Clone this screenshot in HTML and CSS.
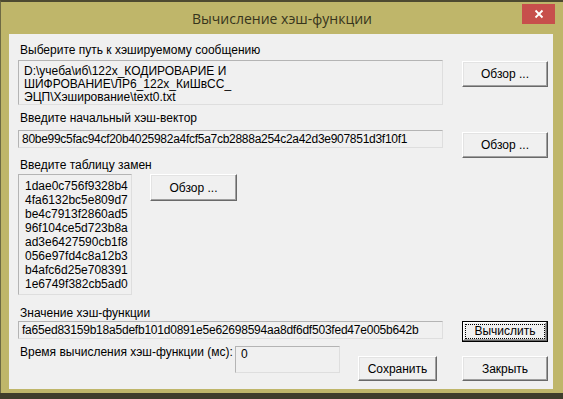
FILE: index.html
```html
<!DOCTYPE html>
<html lang="ru">
  <head>
    <meta charset="UTF-8" />
    <title>Вычисление хэш-функции</title>
    <link rel="stylesheet" href="styles.css">
  </head>
  <body>
    <div class="window">
      <div class="titlebar">
        <span class="title">Вычисление хэш-функции</span>
        <span class="close">
          <svg width="10" height="10" viewBox="0 0 10 10">
            <path d="M1.5 1.5 L8.5 8.5 M8.5 1.5 L1.5 8.5" stroke="#fff" stroke-width="1.8" />
          </svg>
        </span>
      </div>

      <div class="client">
        <div class="label label-path">Выберите путь к хэшируемому сообщению</div>
        <div class="field field-path">
          <div>D:\учеба\иб\122x_КОДИРОВАРИЕ И</div>
          <div>ШИФРОВАНИЕ\ЛР6_122x_КиШвСС_</div>
          <div>ЭЦП\Хэширование\text0.txt</div>
        </div>
        <button class="btn btn-path">Обзор ...</button>

        <div class="label label-iv">Введите начальный хэш-вектор</div>
        <div class="field field-iv">80be99c5fac94cf20b4025982a4fcf5a7cb2888a254c2a42d3e907851d3f10f1</div>
        <button class="btn btn-iv">Обзор ...</button>

        <div class="label label-table">Введите таблицу замен</div>
        <div class="table-row">
          <div class="field field-table">
            <div>1dae0c756f9328b4</div>
            <div>4fa6132bc5e809d7</div>
            <div>be4c7913f2860ad5</div>
            <div>96f104ce5d723b8a</div>
            <div>ad3e6427590cb1f8</div>
            <div>056e97fd4c8a12b3</div>
            <div>b4afc6d25e708391</div>
            <div>1e6749f382cb5ad0</div>
          </div>
          <button class="btn btn-table">Обзор ...</button>
        </div>

        <div class="label label-hash">Значение хэш-функции</div>
        <div class="field field-hash">fa65ed83159b18a5defb101d0891e5e62698594aa8df6df503fed47e005b642b</div>
        <button class="btn btn-calc"><span class="focus">Вычислить</span></button>

        <div class="bottom-row">
          <div class="label label-time">Время вычисления хэш-функции (мс):</div>
          <div class="field field-time">0</div>
          <button class="btn btn-save">Сохранить</button>
          <button class="btn btn-close">Закрыть</button>
        </div>
      </div>
    </div>
  </body>
</html>
```

FILE: styles.css
```css
body {
  margin: 0;
  background-color: #3f3d2b;
  font-family: "Liberation Sans", Arial, sans-serif;
  font-size: 12px;
  color: #000;
}

.window {
  width: 563px;
  height: 393px;
  box-sizing: border-box;
  background-color: #bfb66a;
  border-top: 2px solid #4d4a31;
  border-left: 1px solid #6e6a44;
  display: flex;
  flex-direction: column;
}

.titlebar {
  height: 32px;
  display: grid;
}

.title,
.close {
  grid-area: 1 / 1;
}

.title {
  justify-self: center;
  align-self: center;
  padding-top: 1px;
  font-family: "Open Sans", "Noto Sans", sans-serif;
  font-size: 14px;
  color: #36341c;
}

.close {
  justify-self: end;
  align-self: start;
  margin-top: 2px;
  margin-right: 8px;
  width: 33px;
  height: 20px;
  background-color: #c74f4c;
  display: flex;
  align-items: center;
  justify-content: center;
}

.client {
  margin-left: 8px;
  width: 544px;
  height: 355px;
  box-sizing: border-box;
  background-color: #f0f0f0;
  padding: 9px 0 0 9px;
  display: grid;
  grid-template-columns: 425px 86px;
  grid-template-rows: 14px 48px 25px 18px 26px 121px 26px 18px auto;
  column-gap: 19px;
  align-items: start;
}

.label {
  line-height: 14px;
  padding-left: 2px;
  white-space: nowrap;
}

.field {
  box-sizing: border-box;
  background-color: #f0f0f0;
  border: 1px solid;
  border-color: #b4b4b4 #dedede #dedede #b4b4b4;
  line-height: 14px;
  white-space: nowrap;
  overflow: hidden;
}

.btn {
  box-sizing: border-box;
  font-family: inherit;
  font-size: 12px;
  color: #000;
  background-color: #f0f0f0;
  border: 1px solid;
  border-color: #fff #696969 #696969 #fff;
  box-shadow: inset -1px -1px #a0a0a0, inset 1px 1px #e3e3e3;
  padding: 0;
  width: 86px;
  height: 26px;
}

/* путь к сообщению */
.label-path {
  grid-column: 1;
  grid-row: 1;
}

.field-path {
  grid-column: 1;
  grid-row: 2;
  margin-top: 3px;
  height: 45px;
  padding: 4px 0 0 5px;
  line-height: 13px;
}

.btn-path {
  grid-column: 2;
  grid-row: 2;
  margin-top: 4px;
}

/* хэш-вектор */
.label-iv {
  grid-column: 1;
  grid-row: 3;
  padding-top: 6px;
}

.field-iv {
  grid-column: 1;
  grid-row: 4;
  height: 18px;
  padding: 1px 0 0 3px;
  letter-spacing: -0.28px;
}

.btn-iv {
  grid-column: 2;
  grid-row: 4 / span 2;
  margin-top: 2px;
}

/* таблица замен */
.label-table {
  grid-column: 1;
  grid-row: 5;
  padding-top: 10px;
}

.table-row {
  grid-column: 1;
  grid-row: 6;
  display: flex;
  align-items: flex-start;
  gap: 18px;
}

.field-table {
  width: 114px;
  height: 121px;
  padding: 4px 0 0 6px;
}

.btn-table {
  width: 87px;
  height: 27px;
}

/* значение */
.label-hash {
  grid-column: 1;
  grid-row: 7;
  padding-top: 11px;
}

.field-hash {
  grid-column: 1;
  grid-row: 8;
  height: 18px;
  padding: 1px 0 0 3px;
  letter-spacing: -0.22px;
}

.btn-calc {
  grid-column: 2;
  grid-row: 8;
  height: 21px;
  border-color: #000;
  box-shadow: inset -1px -1px #696969, inset 1px 1px #fff, inset -2px -2px #a0a0a0;
  padding: 3px;
}

.focus {
  display: block;
  height: 100%;
  box-sizing: border-box;
  outline: 1px dotted #000;
  line-height: 13px;
}

.bottom-row {
  grid-column: 1 / span 2;
  grid-row: 9;
  display: flex;
  align-items: flex-start;
}

.label-time {
  flex: 0 0 217px;
  box-sizing: border-box;
  margin-top: 6px;
}

.field-time {
  margin-top: 7px;
  width: 105px;
  height: 27px;
  padding: 0 0 0 5px;
}

.btn-save {
  margin-top: 17px;
  margin-left: 18px;
  width: 79px;
  height: 25px;
}

.btn-close {
  margin-top: 17px;
  margin-left: 25px;
  height: 25px;
}
```
